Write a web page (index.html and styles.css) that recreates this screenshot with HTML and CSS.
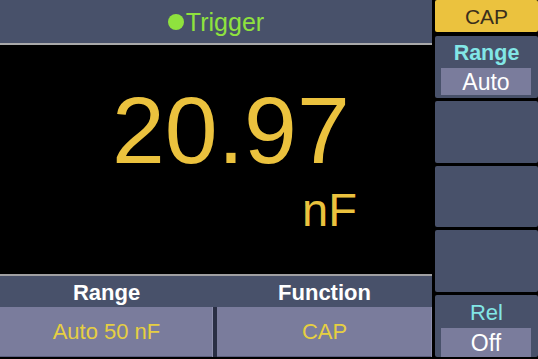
FILE: index.html
```html
<!DOCTYPE html>
<html>
<head>
<meta charset="utf-8">
<link rel="stylesheet" href="styles.css">
</head>
<body>
<div class="screen">
  <div class="main">
    <div class="header"><span class="dot"></span><span class="trig">Trigger</span></div>
    <div class="display">
      <div class="value">20.97</div>
      <div class="unit">nF</div>
    </div>
    <div class="labels">
      <div class="lab">Range</div>
      <div class="lab">Function</div>
    </div>
    <div class="vals">
      <div class="val">Auto 50 nF</div>
      <div class="val">CAP</div>
    </div>
  </div>
  <div class="side">
    <div class="btn-cap">CAP</div>
    <div class="panel range">
      <div class="plabel bold">Range</div>
      <div class="pbox">Auto</div>
    </div>
    <div class="panel"></div>
    <div class="panel"></div>
    <div class="panel"></div>
    <div class="panel rel">
      <div class="plabel">Rel</div>
      <div class="pbox tall">Off</div>
    </div>
  </div>
</div>
</body>
</html>
```
FILE: styles.css
```css
html, body {
  margin: 0;
  padding: 0;
  background: #000;
}
body {
  width: 538px;
  height: 359px;
  overflow: hidden;
  font-family: "Liberation Sans", Arial, sans-serif;
}
.screen {
  display: grid;
  grid-template-columns: 432px 103px;
  column-gap: 3px;
  height: 359px;
}
.main {
  display: flex;
  flex-direction: column;
  height: 359px;
}
.header {
  height: 45px;
  flex: none;
  background: #48516a;
  border-bottom: 2px solid #a9a9aa;
  display: flex;
  align-items: center;
  justify-content: center;
  padding-top: 1px;
  box-sizing: border-box;
}
.dot {
  width: 16px;
  height: 16px;
  border-radius: 50%;
  background: #8fe23e;
  margin-right: 2px;
}
.trig {
  color: #8fe23e;
  font-size: 25px;
  line-height: 30px;
}
.display {
  height: 231px;
  flex: none;
  box-sizing: border-box;
  background: #000;
  border-bottom: 2px solid #a0a0a2;
}
.value {
  color: #ebc23e;
  font-size: 95px;
  line-height: 100px;
  padding-top: 35px;
  padding-left: 112px;
}
.unit {
  color: #ebc23e;
  font-size: 47px;
  line-height: 47px;
  margin-top: 6px;
  padding-left: 302px;
}
.labels {
  height: 31px;
  flex: none;
  background: #48516a;
  display: grid;
  grid-template-columns: 213px 1fr;
  column-gap: 4px;
}
.lab {
  color: #fff;
  font-weight: bold;
  font-size: 22px;
  line-height: 34px;
  text-align: center;
}
.vals {
  height: 50px;
  flex: none;
  display: grid;
  grid-template-columns: 213px 1fr;
  column-gap: 4px;
  background: #2a2f44;
}
.val {
  background: #7a7c9c;
  color: #e6cf42;
  font-size: 22px;
  line-height: 50px;
  text-align: center;
  box-shadow: inset -1px 0 0 #8c8eac, inset 0 -1px 0 #5c6080;
}
.side {
  display: flex;
  flex-direction: column;
  gap: 3px;
  padding-bottom: 2px;
  height: 359px;
  box-sizing: border-box;
}
.btn-cap {
  height: 32px;
  margin-bottom: 1px;
  background: #ebc23e;
  color: #3a2e1c;
  font-size: 21px;
  line-height: 34px;
  text-align: center;
  border-radius: 2px;
  flex: none;
}
.panel {
  flex: 1;
  background: #48516a;
  display: flex;
  flex-direction: column;
  border-radius: 2px;
}
.plabel {
  color: #82e6e6;
  font-size: 22px;
  height: 32px;
  line-height: 34px;
  text-align: center;
}
.plabel.bold {
  font-weight: bold;
  font-size: 21.5px;
}
.pbox {
  margin: 0 7px 0 6px;
  height: 27px;
  background: #7a7c9c;
  color: #fff;
  font-size: 23px;
  line-height: 29px;
  text-align: center;
}
.rel .plabel {
  height: 33px;
  line-height: 36px;
}
.pbox.tall {
  height: 29px;
  line-height: 31px;
}
```
